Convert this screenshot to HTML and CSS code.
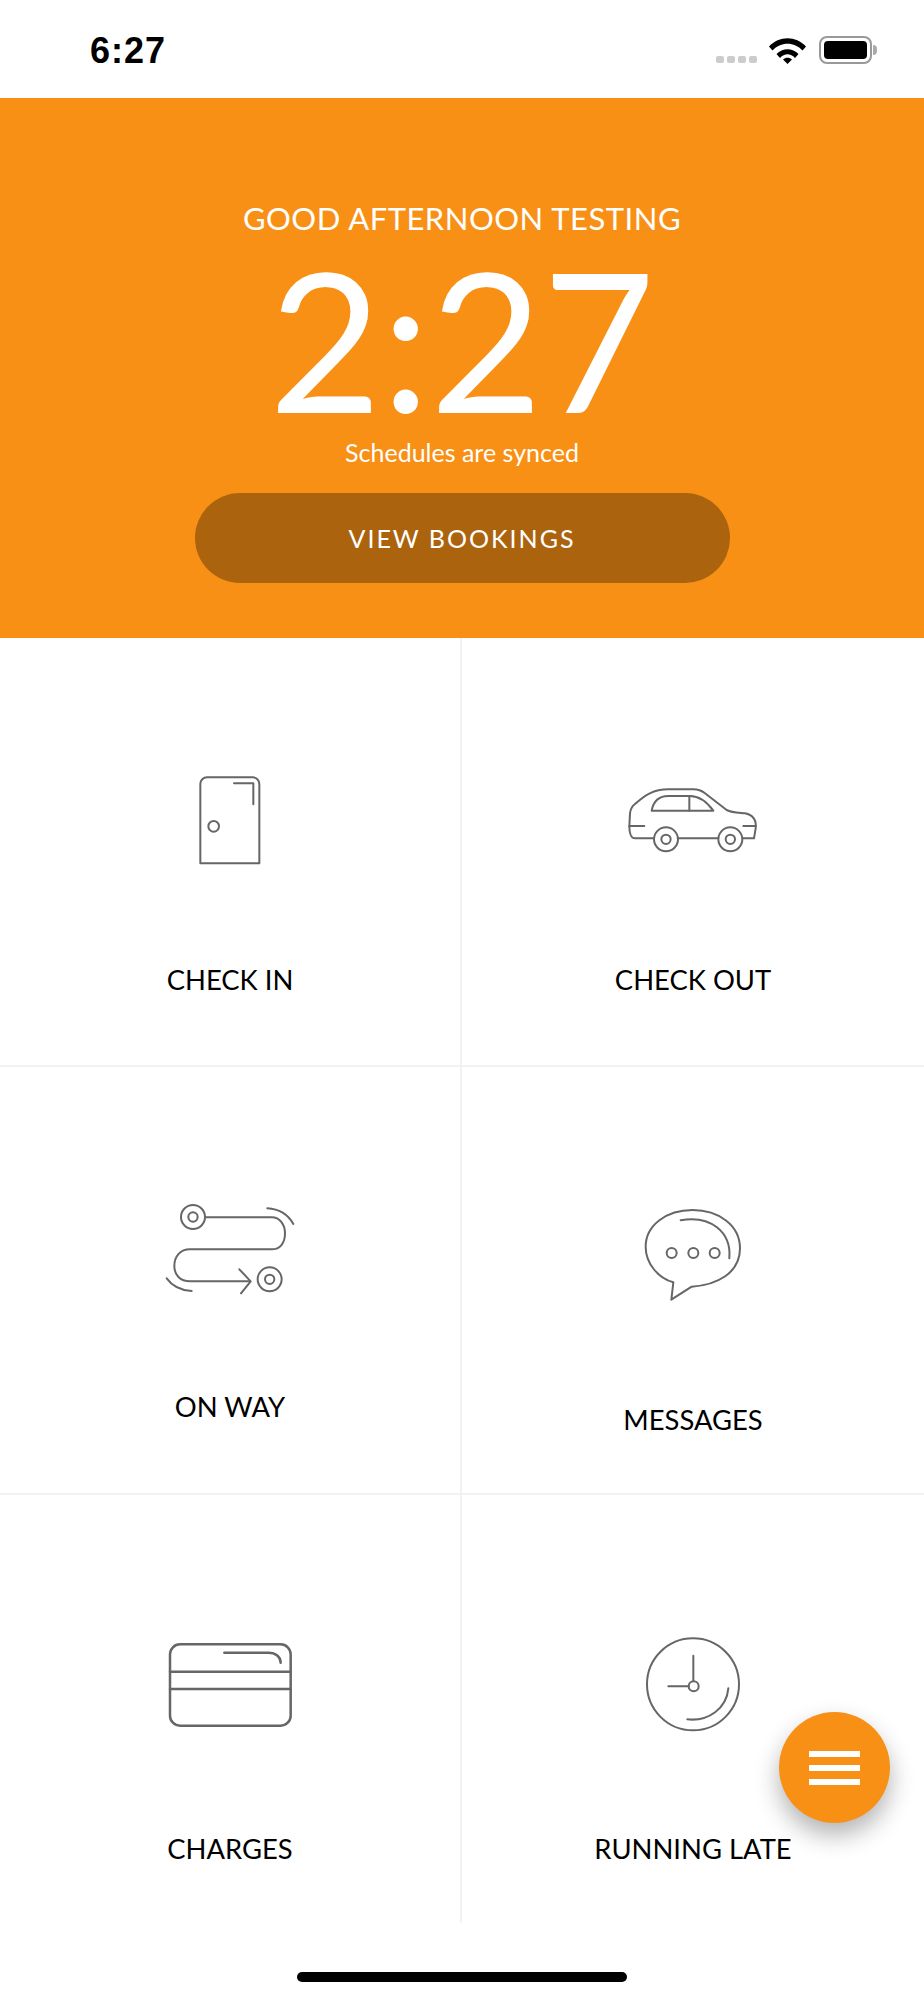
FILE: index.html
```html
<!DOCTYPE html>
<html lang="en">
<head>
<meta charset="utf-8">
<title>Home</title>
<link rel="stylesheet" href="styles.css">
</head>
<body>
<div class="phone">
  <header class="status">
    <span class="status-time">6:27</span>
    <div class="status-right">
      <div class="signal"><i></i><i></i><i></i><i></i></div>
      <svg class="wifi" viewBox="0 0 37 27"><path d="M0 9.500C10-1.500 27-1.500 37 9.500L33.500 13.500C25.500 4.500 11.500 4.500 3.500 13.500Z"/><path d="M7.500 17C13.500 10.500 23.500 10.500 29.500 17L26 21C21.500 16 15.500 16 11 21Z"/><path d="M14 22.500C16.500 20 20.500 20 23 22.500L18.500 27Z"/></svg>
      <div class="battery"><div class="battery-fill"></div></div>
    </div>
  </header>
  <section class="hero">
    <p class="greeting">GOOD AFTERNOON TESTING</p>
    <p class="clock">2:27</p>
    <p class="sync">Schedules are synced</p>
    <a class="cta">VIEW BOOKINGS</a>
  </section>
  <main class="grid">
    <div class="cell cell-top">
      <svg class="icon" viewBox="-60 -33 480 480"><path d="M91 340V102a20 20 0 0 1 20-20H248a20 20 0 0 1 20 20V340Z"/><path d="M192 100H250V163"/><circle cx="131" cy="229" r="16"/></svg>
      <span class="label">CHECK IN</span>
    </div>
    <div class="cell cell-top">
      <svg class="icon" viewBox="9 -93 480 480"><path d="M132 205H75C62 205 58 185 58 170L60 130C62 115 66 108 75 102C105 75 130 58 175 58H250C265 58 275 62 285 70L350 120C365 128 385 128 405 130C428 135 440 150 437 175L432 205H397"/><path d="M203 205H325"/><circle cx="168" cy="208" r="36"/><circle cx="168" cy="208" r="14"/><circle cx="361" cy="208" r="36"/><circle cx="361" cy="208" r="14"/><path d="M125 122H310C285 88 262 78 240 78H175C145 78 130 95 125 122Z"/><path d="M238 78V122"/><path d="M58 168H103M400 168H437"/></svg>
      <span class="label">CHECK OUT</span>
    </div>
    <div class="cell cell-way">
      <svg class="icon" viewBox="0 -72 480 480"><circle cx="129" cy="81" r="36"/><circle cx="129" cy="81" r="14"/><path d="M167 82H365C390 82 405 105 405 130C405 160 390 178 365 178H120C90 178 73 200 73 228C73 255 90 274 120 274H300"/><path d="M268 238L302 274L273 310"/><circle cx="359" cy="268" r="36"/><circle cx="359" cy="268" r="14"/><path d="M352 55Q405 58 430 102"/><path d="M50 265Q75 300 125 303"/></svg>
      <span class="label">ON WAY</span>
    </div>
    <div class="cell cell-low cell-msg">
      <svg class="icon" viewBox="-51 -57 480 480"><path d="M130 262L124 314L185 275C260 270 330 235 330 160C330 90 265 45 188 45C110 45 47 90 47 155C47 205 85 250 130 262Z"/><path d="M152 76C240 60 305 110 298 190"/><circle cx="125" cy="174" r="15"/><circle cx="190" cy="174" r="15"/><circle cx="254" cy="174" r="15"/></svg>
      <span class="label">MESSAGES</span>
    </div>
    <div class="cell cell-low">
      <svg class="icon icon-heavy" viewBox="-15 -60 480 480"><rect x="45" y="58" width="362" height="244" rx="30"/><path d="M45 140H407M45 192H407"/><path d="M208 83H340C362 83 377 95 377 113"/></svg>
      <span class="label">CHARGES</span>
    </div>
    <div class="cell cell-low">
      <svg class="icon" viewBox="-51 -60 480 480"><circle cx="189" cy="178" r="138"/><path d="M190 92V168M115 184H176"/><circle cx="191" cy="184" r="15"/><path d="M295 190C290 250 235 290 172 283"/></svg>
      <span class="label">RUNNING LATE</span>
    </div>
  </main>
  <button class="fab" aria-label="Menu"><i></i><i></i><i></i></button>
  <footer class="home"><div class="home-bar"></div></footer>
</div>
</body>
</html>
```
FILE: styles.css
```css
* { box-sizing: border-box; }
body { margin: 0; background: #fff; font-family: "Lato", sans-serif; }
.phone { position: relative; width: 924px; height: 2000px; overflow: hidden; background: #fff; }

.status { height: 98px; display: flex; justify-content: space-between; padding: 33px 52px 0 90px; }
.status-time { font-family: "Liberation Sans", sans-serif; font-weight: 700; font-size: 36px; line-height: 36px; letter-spacing: 1px; color: #000; }
.status-right { display: flex; align-items: flex-start; }
.signal { display: flex; gap: 3px; margin-top: 23px; }
.signal i { width: 8px; height: 7px; border-radius: 2px; background: #ccc; }
.wifi { width: 37px; height: 27px; margin: 4px 13px 0 12px; fill: #000; }
.battery { position: relative; width: 53px; height: 28px; margin-top: 3px; border: 2px solid #999; border-radius: 8px; padding: 3px; }
.battery::after { content: ""; position: absolute; left: 52px; top: 7px; width: 4px; height: 10px; border-radius: 0 4px 4px 0; background: #aaa; }
.battery-fill { width: 100%; height: 100%; border-radius: 4px; background: #000; }

.hero { height: 540px; background: #f89015; color: #fff; display: flex; flex-direction: column; align-items: center; padding-top: 102px; }
.hero p { margin: 0; }
.greeting { font-size: 31px; line-height: 36px; letter-spacing: .5px; }
.hero .clock { font-size: 194px; font-weight: 400; line-height: 180px; margin-top: 12px; }
.hero .sync { font-size: 25px; line-height: 30px; margin-top: 9px; }
.cta { display: flex; align-items: center; justify-content: center; width: 535px; height: 90px; margin-top: 26px; border-radius: 45px; background: #ab640d; font-size: 25px; letter-spacing: 2px; }

.grid { display: grid; grid-template-columns: 462px 1fr; grid-template-rows: 429px 428px 428px; }
.cell { display: flex; flex-direction: column; align-items: center; padding-top: 100px; border-bottom: 2px solid #f2f2f2; }
.cell:nth-child(odd) { border-right: 2px solid #f2f2f2; }
.cell:nth-child(n+5) { border-bottom: 0; }
.cell-top { padding-top: 101px; }
.cell-way { padding-top: 99px; }
.cell-low { padding-top: 110px; }
.cell-msg { padding-top: 109px; }
.icon { width: 160px; height: 160px; margin-bottom: 65px; fill: none; stroke: #666; stroke-width: 6; stroke-linejoin: round; stroke-linecap: round; flex: none; }
.cell-low .icon { margin-bottom: 68px; }
.icon-heavy { stroke-width: 7.500; }
.label { font-size: 27.400px; line-height: 32px; color: #000; }

.fab { position: absolute; left: 779px; top: 1712px; width: 111px; height: 111px; padding: 0; border: 0; border-radius: 50%; background: #f89015; box-shadow: 0 12px 24px rgba(0,0,0,.3); display: flex; flex-direction: column; align-items: center; justify-content: center; gap: 8px; }
.fab i { display: block; width: 51px; height: 6px; background: #fff; }

.home { height: 77px; display: flex; justify-content: center; padding-top: 49px; }
.home-bar { width: 330px; height: 10px; border-radius: 5px; background: #000; }
```
